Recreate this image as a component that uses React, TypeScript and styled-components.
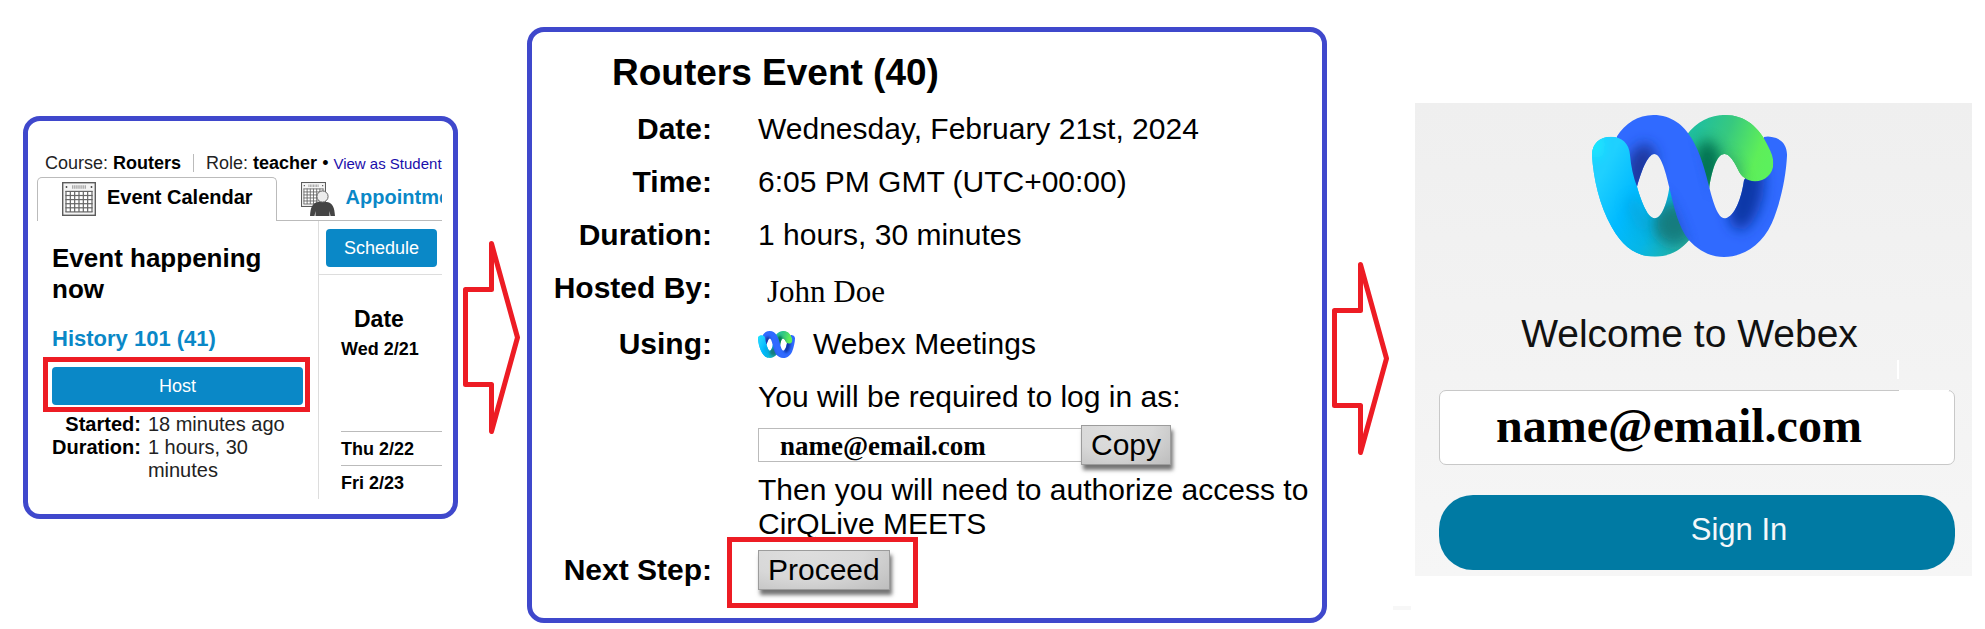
import React, { useId } from "react";
import styled, { createGlobalStyle, css } from "styled-components";

const sans = `"Liberation Sans", Arial, sans-serif`;
const serif = `"Liberation Serif", "Times New Roman", serif`;

const color = {
  frame: "#3f48cc",
  mark: "#ed1c24",
  accent: "#0a88c7",
  link: "#1a0dab",
  line: "#bbbbbb",
  softLine: "#dddddd",
};

const GlobalStyle = createGlobalStyle`
  *, *::before, *::after { box-sizing: border-box; }
  body { margin: 0; background: #fff; color: #000; font-family: ${sans}; }
  h1, h2, h3, p, dl, dd, dt { margin: 0; }
  button, input { font: inherit; }
`;

const Sheet = styled.main`
  display: grid;
  grid-template-columns: minmax(0, 435fr) auto minmax(0, 800fr) auto minmax(0, 557fr);
  align-items: start;
  padding: 27px 13px 6px 23px;
`;

const frame = css`
  border: 5px solid ${color.frame};
  border-radius: 17px;
`;

/* Red rectangle drawn round a control that the reader has to press */
const Marked = styled.div<{ $inset: string }>`
  position: relative;
  &::after {
    content: "";
    position: absolute;
    inset: ${(p) => p.$inset};
    border: 5px solid ${color.mark};
    pointer-events: none;
  }
`;

const ArrowSvg = styled.svg<{ $top: number; $before: number; $after: number }>`
  display: block;
  width: 57px;
  height: 193px;
  margin: ${(p) => `${p.$top}px ${p.$after}px 0 ${p.$before}px`};
`;

function Arrow({ top, before, after }: { top: number; before: number; after: number }) {
  return (
    <ArrowSvg $top={top} $before={before} $after={after} viewBox="0 0 57 193" aria-hidden="true">
      <path
        d="M2.5 48.5H28.5V2.5L54.5 96.5L28.5 190.5V143.5H2.5Z"
        fill="none"
        stroke={color.mark}
        strokeWidth="5"
        strokeLinejoin="round"
      />
    </ArrowSvg>
  );
}

/* ---------- Calendar panel ---------- */

const CalendarPanel = styled.section`
  ${frame}
  margin-top: 89px;
  padding: 32px 11px 15px 9px;
`;

const CourseBar = styled.div`
  display: flex;
  align-items: baseline;
  height: 20px;
  padding-left: 8px;
  font-size: 18px;
  line-height: 20px;
  color: #222;
  white-space: nowrap;
  b { color: #000; }
`;

const Divider = styled.span`
  align-self: center;
  width: 1px;
  height: 18px;
  margin: 0 12px;
  background: ${color.line};
`;

const Dot = styled.span`
  margin: 0 5px;
  color: #000;
`;

const StudentLink = styled.a`
  font-size: 15px;
  color: ${color.link};
  text-decoration: none;
`;

const Tabs = styled.nav`
  display: flex;
  margin-top: 4px;
  height: 44px;
  overflow: hidden;
`;

const Tab = styled.a<{ $active?: boolean }>`
  display: flex;
  align-items: flex-start;
  gap: 11px;
  padding: 4px 23px 0 24px;
  border: 1px solid transparent;
  font-size: 20px;
  font-weight: bold;
  line-height: 30px;
  white-space: nowrap;
  text-decoration: none;
  svg { flex: none; width: 34px; height: 34px; }
  ${(p) =>
    p.$active
      ? css`
          flex: none;
          color: #000;
          border-color: ${color.line};
          border-bottom: 0;
          border-radius: 5px 5px 0 0;
        `
      : css`
          flex: 1 1 0;
          min-width: 0;
          color: ${color.accent};
          border-width: 1px 0;
          border-bottom-color: ${color.line};
        `}
`;

const CalendarBody = styled.div`
  display: grid;
  grid-template-columns: minmax(0, 281fr) minmax(0, 124fr);
`;

const NowColumn = styled.div`
  padding: 22px 15px 0;
`;

const NowHeading = styled.h2`
  font-size: 26px;
  line-height: 31px;
`;

const EventName = styled.h3`
  margin: 21px 0 15px;
  font-size: 22px;
  line-height: 26px;
  a { color: ${color.accent}; text-decoration: none; }
`;

const BlueButton = styled.button`
  display: block;
  width: 100%;
  padding: 9px 0;
  border: 0;
  border-radius: 4px;
  background: ${color.accent};
  color: #fff;
  font-size: 18px;
  line-height: 20px;
`;

const Facts = styled.dl`
  display: grid;
  grid-template-columns: max-content 1fr;
  column-gap: 7px;
  margin-top: 8px;
  font-size: 20px;
  line-height: 23px;
  dt { font-weight: bold; text-align: right; }
  dd { color: #222; }
`;

const DateColumn = styled.div`
  border-left: 1px solid ${color.softLine};
`;

const ScheduleBar = styled.div`
  padding: 8px 5px 7px 7px;
  border-bottom: 1px solid ${color.softLine};
`;

const DateTable = styled.table`
  width: calc(100% - 22px);
  margin-left: 22px;
  border-collapse: collapse;
  font-size: 18px;
  line-height: 20px;
  font-weight: bold;
  text-align: left;
  thead th {
    padding: 31px 0 0 13px;
    font-size: 23px;
    line-height: 26px;
  }
  td {
    height: 34px;
    padding: 7px 0 0;
    vertical-align: top;
  }
  tbody tr:first-child td { height: 99px; }
  tbody tr + tr td { border-top: 1px solid ${color.line}; }
`;

function GridSheet({ size }: { size: number }) {
  const s = size / 34;
  const marks = [0, 1, 2, 3, 4, 5, 6];
  return (
    <g transform={`scale(${s})`}>
      <rect x="0.7" y="0.7" width="32.6" height="32.6" fill="#f4f4f4" stroke="#5c5c5c" strokeWidth="1.4" />
      <circle cx="4.5" cy="5" r="0.9" fill="#444" />
      <circle cx="29.5" cy="5" r="0.9" fill="#444" />
      <path d="M10 5H24" stroke="#aaa" strokeWidth="3.4" strokeDasharray="1.4 0.7" />
      <rect x="3.6" y="9" width="26.8" height="21" fill="#fff" />
      <g stroke="#666" strokeWidth="1.2">
        {marks.map((i) => (
          <path key={`v${i}`} d={`M${4 + i * 4.33} 9V30`} />
        ))}
        {marks.slice(0, 6).map((i) => (
          <path key={`h${i}`} d={`M3.4 ${9.4 + i * 4.1}H30.6`} />
        ))}
      </g>
    </g>
  );
}

const CalendarIcon = () => (
  <svg viewBox="0 0 34 34" aria-hidden="true">
    <GridSheet size={34} />
  </svg>
);

const AppointmentIcon = () => (
  <svg viewBox="0 0 34 34" aria-hidden="true">
    <GridSheet size={25} />
    <path d="M9 34C9.5 26 11 21 17 20H26C32 21 33.5 26 34 34H29.500L28.500 29V34H14.500V29L13.500 34Z" fill="#444" />
    <circle cx="21.500" cy="14.500" r="5.600" fill="#ececec" stroke="#666" strokeWidth="1" />
  </svg>
);

/* ---------- Event details panel ---------- */

const EventPanel = styled.section`
  ${frame}
  padding: 19px 0 28px;
`;

const EventTitle = styled.h1`
  padding-left: 80px;
  font-size: 37px;
  line-height: 44px;
`;

const Rows = styled.dl`
  display: grid;
  grid-template-columns: 180px minmax(0, 1fr);
  column-gap: 46px;
  row-gap: 19px;
  margin-top: 17px;
  font-size: 30px;
  line-height: 34px;
  dt { font-weight: bold; text-align: right; }
`;

const HostName = styled.dd`
  padding: 5px 0 0 9px;
  font-family: ${serif};
  font-size: 31px;
  line-height: 32px;
`;

const Service = styled.dd`
  display: flex;
  align-items: center;
  gap: 18px;
  svg { width: 37px; height: 27px; }
`;

const Steps = styled.dd`
  grid-column: 2;
`;

const AccountLine = styled.div`
  display: flex;
  align-items: center;
  margin: 11px 0 8px;
`;

const AccountInput = styled.input`
  width: 323px;
  min-width: 0;
  height: 34px;
  padding: 1px 0 0 21px;
  border: 1px solid ${color.line};
  border-right: 0;
  background: #fff;
  color: #000;
  font-family: ${serif};
  font-size: 27px;
  font-weight: bold;
`;

const GrayButton = styled.button`
  flex: none;
  display: block;
  padding: 2px 9px;
  border: 1px solid #9c9c9c;
  border-radius: 0;
  background: radial-gradient(ellipse at 35% 0%, #dedede 0%, #d8d8d8 50%, #bdbdbd 100%);
  box-shadow: 2px 5px 4px rgba(0, 0, 0, 0.55);
  color: #000;
  font-size: 30px;
  line-height: 34px;
`;

const NextRow = styled.dl`
  display: grid;
  grid-template-columns: 180px max-content;
  column-gap: 46px;
  align-items: center;
  margin-top: 9px;
  font-size: 30px;
  line-height: 34px;
  dt { font-weight: bold; text-align: right; }
`;

/* ---------- Sign-in panel ---------- */

const SignInPanel = styled.section`
  position: relative;
  margin-top: 76px;
  padding: 12px 17px 6px 24px;
  background: linear-gradient(#efefef, #f6f6f6);
`;

const Welcome = styled.header`
  display: flex;
  flex-direction: column;
  align-items: center;
  gap: 54px;
  padding-right: 15px;
  svg { width: 195px; height: 142px; }
  h2 {
    font-size: 39px;
    font-weight: normal;
    line-height: 46px;
    color: #111;
    white-space: nowrap;
  }
`;

const EmailField = styled.div`
  position: relative;
  margin: 33px 0 30px;
  &::before {
    content: "";
    position: absolute;
    top: 0;
    right: 6px;
    width: 50px;
    height: 1px;
    background: #fff;
  }
`;

const EmailInput = styled.input`
  display: block;
  width: 100%;
  height: 75px;
  padding: 0 0 4px 56px;
  border: 1px solid #c8c8c8;
  border-radius: 7px;
  background: #fff;
  color: #000;
  font-family: ${serif};
  font-size: 48px;
  font-weight: bold;
`;

const SignInButton = styled.button`
  display: block;
  width: 100%;
  padding: 17px 0 22px 84px;
  border: 0;
  border-radius: 34px;
  background: #007aa3;
  color: #f4f8fa;
  font-size: 31px;
  line-height: 36px;
`;

const Caret = styled.span`
  position: absolute;
  top: 257px;
  right: 73px;
  width: 2px;
  height: 19px;
  background: #fff;
`;

const Dash = styled.span`
  position: absolute;
  top: 503px;
  left: -22px;
  width: 18px;
  height: 4px;
  background: #f7f7f7;
`;

const ribbon = {
  cyan: "M66 165C66 130 90 110 123 110C155 110 178 130 180 165C183 200 190 230 201 260C217 315 235 354 254 354C274 354 290 315 298 262L330 250L400 380L357 420C330 452 295 469 255 469C200 469 158 440 125 380C88 315 70 235 66 165Z",
  green:
    "M350 105C380 65 420 45 465 45C525 45 567 80 595 140C604 158 610 172 610 190C610 222 585 243 555 243C530 243 513 228 504 208C490 180 478 162 463 162C440 162 425 215 418 262L400 300L340 200Z",
  blue: "M140 110C165 70 205 45 250 45C305 45 340 75 365 115C392 160 405 210 418 262C430 310 445 354 463 354C487 354 512 310 522 240L560 180L582 111C590 109 598 109 605 111C635 115 652 135 651 168C648 225 635 300 605 370C575 435 520 470 462 470C420 470 385 450 357 420C325 380 312 320 298 262C286 210 272 162 253 162C232 162 212 220 201 260L170 200Z",
};

function WebexLogo() {
  const id = useId().replace(/[^a-zA-Z0-9]/g, "");
  const ref = (name: string) => `url(#${id}${name})`;
  const cyan = (
    <g clipPath={ref("c")}>
      <rect x="60" y="100" width="350" height="375" fill={ref("cf")} />
      <ellipse cx="312" cy="370" rx="62" ry="65" fill="#157a7c" filter={ref("b")} opacity="0.95" />
      <ellipse cx="205" cy="345" rx="22" ry="60" fill="#0a93c4" filter={ref("b")} opacity="0.4" transform="rotate(-25 205 345)" />
      <ellipse cx="74" cy="135" rx="18" ry="40" fill="#14ffff" filter={ref("b")} opacity="0.8" />
    </g>
  );
  const green = (
    <g clipPath={ref("g")}>
      <rect x="330" y="40" width="290" height="270" fill={ref("gf")} />
      <ellipse cx="412" cy="200" rx="42" ry="80" fill="#06704f" filter={ref("b")} opacity="0.95" />
      <ellipse cx="492" cy="205" rx="14" ry="50" fill="#218a63" filter={ref("b")} opacity="0.7" transform="rotate(-28 492 205)" />
    </g>
  );
  return (
    <svg viewBox="66 45 585 425" preserveAspectRatio="none" aria-hidden="true">
      <defs>
        <clipPath id={`${id}c`}><path d={ribbon.cyan} /></clipPath>
        <clipPath id={`${id}g`}><path d={ribbon.green} /></clipPath>
        <clipPath id={`${id}l`}><path d={ribbon.blue} /></clipPath>
        <clipPath id={`${id}w`}><rect x="60" y="40" width="170" height="435" /></clipPath>
        <clipPath id={`${id}e`}><rect x="455" y="40" width="200" height="435" /></clipPath>
        <filter id={`${id}b`} x="-150%" y="-150%" width="400%" height="400%">
          <feGaussianBlur stdDeviation="19" />
        </filter>
        <linearGradient id={`${id}cf`} gradientUnits="userSpaceOnUse" x1="80" y1="250" x2="360" y2="400">
          <stop offset="0" stopColor="#1fd0ff" />
          <stop offset="0.35" stopColor="#00baff" />
          <stop offset="0.65" stopColor="#06b6e6" />
          <stop offset="1" stopColor="#24b3a5" />
        </linearGradient>
        <linearGradient id={`${id}gf`} gradientUnits="userSpaceOnUse" x1="370" y1="110" x2="590" y2="190">
          <stop offset="0" stopColor="#20bf9d" />
          <stop offset="0.4" stopColor="#37c97f" />
          <stop offset="0.85" stopColor="#5eee59" />
          <stop offset="1" stopColor="#5cf05c" />
        </linearGradient>
      </defs>
      {cyan}
      {green}
      <g clipPath={ref("l")}>
        <rect x="130" y="40" width="530" height="435" fill="#306aff" />
        <ellipse cx="212" cy="205" rx="42" ry="76" fill="#1a37a0" filter={ref("b")} transform="rotate(15 212 205)" />
        <ellipse cx="528" cy="280" rx="50" ry="112" fill="#1038a8" filter={ref("b")} transform="rotate(12 528 280)" />
        <ellipse cx="312" cy="365" rx="15" ry="90" fill="#1f49bd" filter={ref("b")} opacity="0.8" transform="rotate(-22 312 365)" />
        <ellipse cx="412" cy="195" rx="10" ry="80" fill="#2350d0" filter={ref("b")} opacity="0.5" transform="rotate(-14 412 195)" />
      </g>
      <g clipPath={ref("w")}>{cyan}</g>
      <g clipPath={ref("e")}>{green}</g>
    </svg>
  );
}

export default function App() {
  return (
    <>
      <GlobalStyle />
      <Sheet>
        <CalendarPanel aria-label="Course calendar">
          <CourseBar>
            <span>Course: <b>Routers</b></span>
            <Divider />
            <span>Role: <b>teacher</b></span>
            <Dot>•</Dot>
            <StudentLink href="#student">View as Student</StudentLink>
          </CourseBar>
          <Tabs>
            <Tab href="#events" $active>
              <CalendarIcon />
              Event Calendar
            </Tab>
            <Tab href="#appointments">
              <AppointmentIcon />
              Appointments
            </Tab>
          </Tabs>
          <CalendarBody>
            <NowColumn>
              <NowHeading>Event happening now</NowHeading>
              <EventName><a href="#history">History 101 (41)</a></EventName>
              <Marked $inset="-10px -7px -7px -9px">
                <BlueButton type="button">Host</BlueButton>
              </Marked>
              <Facts>
                <dt>Started:</dt>
                <dd>18 minutes ago</dd>
                <dt>Duration:</dt>
                <dd>1 hours, 30 minutes</dd>
              </Facts>
            </NowColumn>
            <DateColumn>
              <ScheduleBar>
                <BlueButton type="button">Schedule</BlueButton>
              </ScheduleBar>
              <DateTable>
                <thead>
                  <tr><th scope="col">Date</th></tr>
                </thead>
                <tbody>
                  <tr><td>Wed 2/21</td></tr>
                  <tr><td>Thu 2/22</td></tr>
                  <tr><td>Fri 2/23</td></tr>
                </tbody>
              </DateTable>
            </DateColumn>
          </CalendarBody>
        </CalendarPanel>

        <Arrow top={214} before={5} after={7} />

        <EventPanel aria-label="Event details">
          <EventTitle>Routers Event (40)</EventTitle>
          <Rows>
            <dt>Date:</dt>
            <dd>Wednesday, February 21st, 2024</dd>
            <dt>Time:</dt>
            <dd>6:05 PM GMT (UTC+00:00)</dd>
            <dt>Duration:</dt>
            <dd>1 hours, 30 minutes</dd>
            <dt>Hosted By:</dt>
            <HostName>John Doe</HostName>
            <dt>Using:</dt>
            <Service><WebexLogo />Webex Meetings</Service>
            <Steps>
              <label htmlFor="account">You will be required to log in as:</label>
              <AccountLine>
                <AccountInput id="account" defaultValue="name@email.com" />
                <GrayButton type="button">Copy</GrayButton>
              </AccountLine>
              <p>Then you will need to authorize access to CirQLive MEETS</p>
            </Steps>
          </Rows>
          <NextRow>
            <dt>Next Step:</dt>
            <dd>
              <Marked $inset="-13px -28px -18px -31px">
                <GrayButton type="button">Proceed</GrayButton>
              </Marked>
            </dd>
          </NextRow>
        </EventPanel>

        <Arrow top={235} before={5} after={26} />

        <SignInPanel aria-label="Webex sign in">
          <Welcome>
            <WebexLogo />
            <h2>Welcome to Webex</h2>
          </Welcome>
          <EmailField>
            <EmailInput aria-label="Email address" type="text" defaultValue="name@email.com" />
          </EmailField>
          <SignInButton type="button">Sign In</SignInButton>
          <Caret />
          <Dash />
        </SignInPanel>
      </Sheet>
    </>
  );
}
